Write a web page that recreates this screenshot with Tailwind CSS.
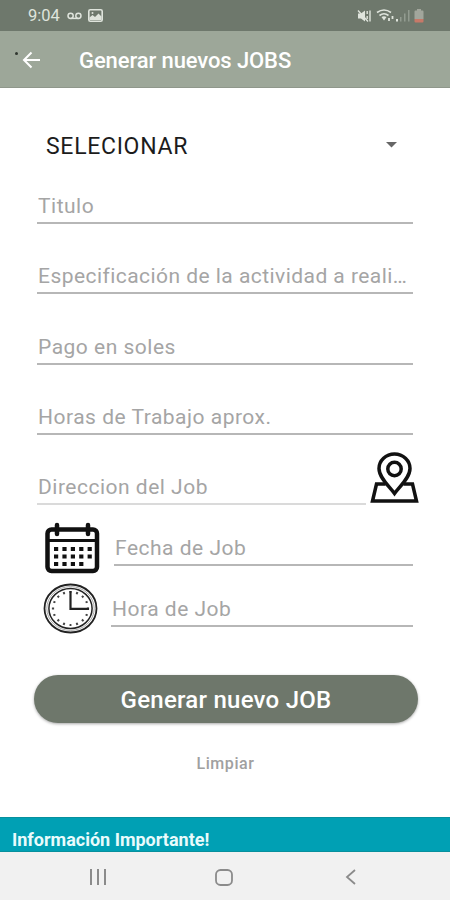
<!DOCTYPE html>
<html lang="es">
<head>
  <meta charset="UTF-8" />
  <meta name="viewport" content="width=device-width, initial-scale=1" />
  <title>Generar nuevos JOBS</title>
  <script src="https://cdn.jsdelivr.net/npm/@tailwindcss/browser@4"></script>
</head>
<body class="bg-white font-['Roboto',sans-serif]">
  <div class="w-[450px] h-[900px] flex flex-col overflow-hidden">

    <!-- Status bar -->
    <div class="h-[31px] shrink-0 bg-[#6e786c] flex items-center justify-between pl-[28px] pr-[26px] text-[#dfe4dc]">
      <div class="flex items-center">
        <span class="w-[39px] pt-px text-[16.5px] leading-none whitespace-nowrap">9:04</span>
        <svg class="w-[15px] h-[8px]" viewBox="0 0 15 8" fill="none" stroke="currentColor" stroke-width="1.5"><circle cx="3.6" cy="3.8" r="2.6"/><circle cx="11.4" cy="3.8" r="2.6"/><path d="M3.6 6.4h7.8"/></svg>
        <svg class="ml-[6px] w-[15px] h-[13px]" viewBox="0 0 15 13"><rect x=".8" y=".8" width="13.4" height="11.4" rx="1.5" fill="none" stroke="currentColor" stroke-width="1.6"/><path d="M1.5 11V8.500l3-2.500 2.500 2 3.500-3.500 3 3V11z" fill="currentColor"/><circle cx="4.500" cy="4" r="1" fill="currentColor"/></svg>
      </div>
      <div class="flex items-center">
        <svg class="w-[15px] h-[14px]" viewBox="0 0 15 14" fill="none" stroke="currentColor"><path d="M1 4.500h3l4-3v11l-4-3H1z" fill="currentColor" stroke="none"/><path d="M1 1.500l10 11" stroke-width="1.400"/><path d="M10.200 2v3M10.200 7v3M13 1.500v11" stroke-width="1.400"/></svg>
        <svg class="ml-[4px] w-[19px] h-[13px]" viewBox="0 0 19 13" fill="none" stroke="currentColor" stroke-width="1.600"><path d="M1 3.500q7-5 14 0M3.500 6.500q4.500-3.500 9 0"/><path d="M5.500 8q2.500-1.500 5 0L8 11.500z" fill="currentColor" stroke="none"/><path d="M13 12V9M16.500 10V7" stroke-width="1.800"/></svg>
        <svg class="ml-[1px] w-[14px] h-[13px]" viewBox="0 0 14 13"><path d="M0 10h2v2.500H0z" fill="currentColor"/><path d="M4 8h1.500v4.500H4zM8 4.500h1.500v8H8zM12 1h1.500v11.500H12z" fill="#929b90"/></svg>
        <svg class="ml-[4px] w-[10px] h-[14px]" viewBox="0 0 10 14"><path d="M3 0h4v1.500h1.500q1 0 1 1V10H.500V2.500q0-1 1-1H3z" fill="#a2a69c"/><path d="M.500 10h9v2.500q0 1-1 1h-7q-1 0-1-1z" fill="#c77968"/></svg>
      </div>
    </div>

    <!-- App bar -->
    <header class="h-[57px] shrink-0 bg-[#9da799] border-b border-[#8f978b] flex items-center pl-[15px] text-white">
      <span class="w-[3px] h-[3px] rounded-full bg-[#30362f] mb-[11px]"></span>
      <svg class="ml-[4px] mt-px w-[19px] h-[18px]" viewBox="0 0 19 18" fill="none" stroke="currentColor" stroke-width="2"><path d="M18 9H2M9.500 1.500L2 9l7.500 7.500"/></svg>
      <h1 class="ml-[38px] pt-[3px] text-[22px] tracking-[-0.1px] font-medium leading-none whitespace-nowrap">Generar nuevos JOBS</h1>
    </header>

    <main class="flex-1 flex flex-col px-[37px]">
      <!-- Category -->
      <div class="h-[101px] shrink-0 flex items-center justify-between pl-[9px] pr-[16px] pt-[15px]">
        <span class="text-[23px] tracking-[0.7px] leading-none text-[#1c1c1c]">SELECIONAR</span>
        <svg class="mb-[2px] w-[11px] h-[6px]" viewBox="0 0 11 6"><path d="M0 0h11L5.500 5.500z" fill="#666"/></svg>
      </div>

      <form class="flex flex-col text-[21px] tracking-[0.5px]">
        <input type="text" placeholder="Titulo" class="h-[35px] w-full pl-px border-b-2 border-[#b7b7b7] placeholder:text-[#a5a5a5]" />
        <input type="text" placeholder="Especificación de la actividad a reali…" class="mt-[35px] h-[35px] w-full pl-px border-b-2 border-[#b7b7b7] tracking-[0.45px] placeholder:text-[#a5a5a5]" />
        <input type="text" placeholder="Pago en soles" class="mt-[36px] h-[35px] w-full pl-px border-b-2 border-[#b7b7b7] placeholder:text-[#a5a5a5]" />
        <input type="text" placeholder="Horas de Trabajo aprox." class="mt-[35px] h-[35px] w-full pl-px border-b-2 border-[#b7b7b7] placeholder:text-[#a5a5a5]" />

        <!-- Address -->
        <div class="mt-[17px] h-[53px] flex items-end justify-between -mr-[6px]">
          <input type="text" placeholder="Direccion del Job" class="h-[35px] w-[329px] pl-px border-b-2 border-[#dadada] placeholder:text-[#a5a5a5]" />
          <svg class="mb-[2px] w-[49px] h-[51px]" viewBox="0 0 49 51" fill="none" stroke="#111" stroke-width="3.500"><path d="M15.500 32H6.500L2.500 49h44L42.500 32H33.500"/><path d="M24.500 41.500C20 35 9 26 9 16.500a15.500 14.500 0 0 1 31 0C40 26 29 35 24.500 41.500z"/><circle cx="24.500" cy="17" r="6.700"/></svg>
        </div>

        <!-- Date -->
        <div class="mt-[17px] h-[53px] flex items-start justify-between">
          <svg class="ml-[8px] w-[55px] h-[52px]" viewBox="0 0 55 52" fill="none" stroke="#111"><rect x="2.500" y="7.500" width="49.500" height="41.500" rx="4" stroke-width="4.500"/><path d="M2 18.500h50" stroke-width="3.200"/><path d="M12 3v9M43 3v9" stroke-width="4.500" stroke-linecap="round"/><path d="M9 27h39M9 34.500h39" stroke-width="4" stroke-dasharray="4.200 4.200"/><path d="M9 42h30.500" stroke-width="4" stroke-dasharray="4.200 4.200"/></svg>
          <input type="text" placeholder="Fecha de Job" class="mt-[9px] h-[35px] w-[299px] pl-px border-b-2 border-[#b7b7b7] placeholder:text-[#a5a5a5]" />
        </div>

        <!-- Time -->
        <div class="mt-[8px] h-[53px] flex items-start justify-between">
          <svg class="ml-[6px] w-[55px] h-[51px]" viewBox="0 0 55 51" fill="none" stroke="#222"><ellipse cx="27.500" cy="25.500" rx="26" ry="24" stroke-width="1.800"/><ellipse cx="27.500" cy="25.500" rx="23.700" ry="21.900" stroke="#aaa" stroke-width="1"/><ellipse cx="27.500" cy="25.500" rx="21.600" ry="20" stroke-width="1.500"/><ellipse cx="27.500" cy="25.500" rx="17.500" ry="16.500" pathLength="160" stroke="#444" stroke-width="2.200" stroke-dasharray="3 7" stroke-dashoffset="1.500"/><path d="M27.500 8v17.800H46" stroke-width="2.200"/></svg>
          <input type="text" placeholder="Hora de Job" class="mt-[9px] h-[35px] w-[302px] pl-px border-b-2 border-[#b7b7b7] placeholder:text-[#a5a5a5]" />
        </div>
      </form>

      <!-- Actions -->
      <button type="submit" class="mt-[39px] -ml-[3px] h-[48px] w-[384px] pt-px shrink-0 rounded-full bg-[#6e776b] text-white text-[24px] tracking-[0.25px] font-medium shadow-[0_1px_3px_rgba(0,0,0,0.35)]">Generar nuevo JOB</button>
      <button type="reset" class="mt-[31px] ml-px self-center text-[16px] leading-[20px] tracking-[0.6px] font-medium text-[#a0a0a0]">Limpiar</button>
    </main>

    <!-- Info banner -->
    <div class="h-[35px] shrink-0 bg-[#00a0b4] border-y border-[#07909d] pl-[12px] pt-[11px] text-[18px] leading-[22px] font-bold text-[#e9fbfc]">Información Importante!</div>

    <!-- Navigation bar -->
    <nav class="h-[48px] shrink-0 bg-[#f1f1f1] flex items-center justify-between pl-[89px] pr-[94px] pt-[2px] text-[#8b8b8b]">
      <svg class="w-[18px] h-[16px]" viewBox="0 0 18 16" stroke="currentColor" stroke-width="2"><path d="M2 0v16M9 0v16M16 0v16"/></svg>
      <svg class="-ml-[4px] w-[18px] h-[17px]" viewBox="0 0 18 17" fill="none" stroke="currentColor" stroke-width="1.800"><rect x="1" y="1" width="16" height="15" rx="4.500"/></svg>
      <svg class="w-[11px] h-[16px]" viewBox="0 0 11 16" fill="none" stroke="currentColor" stroke-width="1.800"><path d="M10 1L2 8l8 7"/></svg>
    </nav>

  </div>
</body>
</html>
